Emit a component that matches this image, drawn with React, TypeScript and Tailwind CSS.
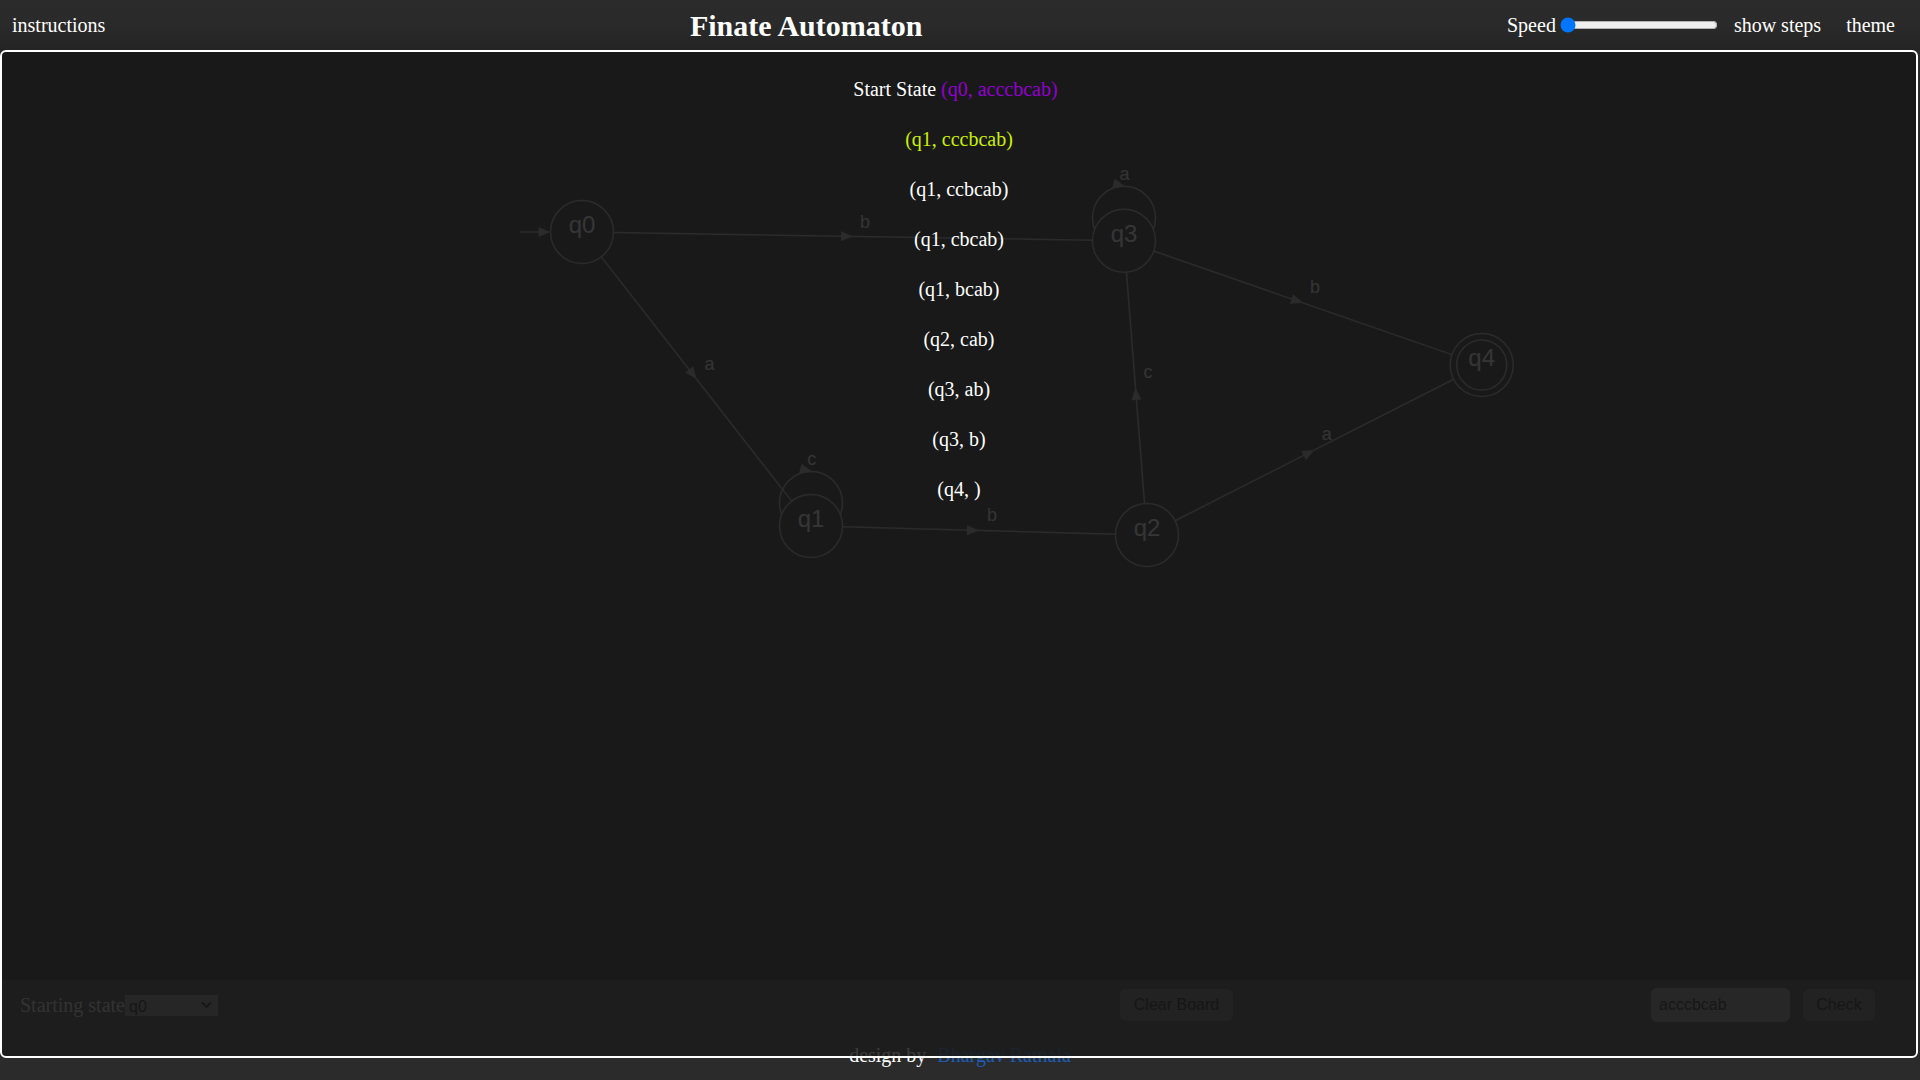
import React from "react";

type Node = { id: string; x: number; y: number; final?: boolean };
type Edge = { from: string; to: string; ch: string; lx: number; ly: number };
type Loop = { at: string; ch: string; lx: number; ly: number };

const R = 31.5;
const STROKE = "#8a8a8a";
const NODE_TEXT = "#d2d2d2";
const EDGE_TEXT = "#c8c8c8";

const nodes: Node[] = [
    { id: "q0", x: 582, y: 232 },
    { id: "q1", x: 811, y: 526 },
    { id: "q2", x: 1147, y: 535 },
    { id: "q3", x: 1124, y: 240.7 },
    { id: "q4", x: 1481.7, y: 365, final: true },
];

const edges: Edge[] = [
    { from: "q0", to: "q3", ch: "b", lx: 865, ly: 228 },
    { from: "q0", to: "q1", ch: "a", lx: 709.5, ly: 370 },
    { from: "q1", to: "q2", ch: "b", lx: 992, ly: 520.7 },
    { from: "q2", to: "q3", ch: "c", lx: 1148, ly: 378 },
    { from: "q3", to: "q4", ch: "b", lx: 1315, ly: 293 },
    { from: "q2", to: "q4", ch: "a", lx: 1326.7, ly: 440 },
];

const loops: Loop[] = [
    { at: "q1", ch: "c", lx: 811.7, ly: 465 },
    { at: "q3", ch: "a", lx: 1124.5, ly: 180 },
];

const steps = [
    "(q1, cccbcab)",
    "(q1, ccbcab)",
    "(q1, cbcab)",
    "(q1, bcab)",
    "(q2, cab)",
    "(q3, ab)",
    "(q3, b)",
    "(q4, )",
];

const byId = (id: string) => nodes.find((n) => n.id === id)!;

// triangle with its tip at (x, y) pointing along (ux, uy)
const arrowHead = (x: number, y: number, ux: number, uy: number) => {
    const bx = x - ux * 12;
    const by = y - uy * 12;
    const px = -uy * 5;
    const py = ux * 5;
    return `${x},${y} ${bx + px},${by + py} ${bx - px},${by - py}`;
};

const Graph = () => {
    return (
        <svg
            className="absolute inset-0"
            width={1918}
            height={930}
            viewBox="0 50 1918 930"
            fontFamily="'Liberation Sans', Arial, sans-serif"
        >
            {/* start arrow */}
            <line x1={520} y1={232} x2={542} y2={232} stroke={STROKE} strokeWidth={1.5} />
            <polygon points={arrowHead(550.5, 232, 1, 0)} fill={STROKE} />

            {edges.map((e, i) => {
                const a = byId(e.from);
                const b = byId(e.to);
                const dx = b.x - a.x;
                const dy = b.y - a.y;
                const len = Math.hypot(dx, dy);
                const ux = dx / len;
                const uy = dy / len;
                const mx = (a.x + b.x) / 2;
                const my = (a.y + b.y) / 2;
                return (
                    <g key={i}>
                        <line
                            x1={a.x + ux * R}
                            y1={a.y + uy * R}
                            x2={b.x - ux * R}
                            y2={b.y - uy * R}
                            stroke={STROKE}
                            strokeWidth={1.5}
                        />
                        <polygon points={arrowHead(mx, my, ux, uy)} fill={STROKE} />
                        <text x={e.lx} y={e.ly} fontSize={18} textAnchor="middle" fill={EDGE_TEXT}>
                            {e.ch}
                        </text>
                    </g>
                );
            })}

            {loops.map((l, i) => {
                const n = byId(l.at);
                const cy = n.y - 23;
                return (
                    <g key={i}>
                        <circle cx={n.x} cy={cy} r={R} fill="none" stroke={STROKE} strokeWidth={1.5} />
                        <polygon points={arrowHead(n.x + 1, cy - R, 0.97, 0.24)} fill={STROKE} />
                        <text x={l.lx} y={l.ly} fontSize={18} textAnchor="middle" fill={EDGE_TEXT}>
                            {l.ch}
                        </text>
                    </g>
                );
            })}

            {nodes.map((n) => (
                <g key={n.id}>
                    <circle cx={n.x} cy={n.y} r={R} fill="#1a1a1a" stroke={STROKE} strokeWidth={1.5} />
                    {n.final && (
                        <circle cx={n.x} cy={n.y} r={25} fill="none" stroke={STROKE} strokeWidth={1.5} />
                    )}
                    <text x={n.x} y={n.y + 1} fontSize={24} textAnchor="middle" fill={NODE_TEXT}>
                        {n.id}
                    </text>
                </g>
            ))}
        </svg>
    );
};

const Toolbar = () => {
    return (
        <div className="h-[78px] bg-[#2e2e2e] pt-[8px] pl-[20px]">
            <div className="flex h-[34px] items-center">
                <span className="text-[20px] text-[#bebebe]">Starting state</span>
                <div className="relative h-[21px] w-[93px] bg-[#6a6a6a]">
                    <select
                        defaultValue="q0"
                        className="h-full w-full appearance-none bg-transparent pl-[4px] font-['Liberation_Sans',Arial,sans-serif] text-[16px] leading-[21px] text-black outline-none"
                    >
                        <option value="q0">q0</option>
                        <option value="q1">q1</option>
                        <option value="q2">q2</option>
                        <option value="q3">q3</option>
                        <option value="q4">q4</option>
                    </select>
                    <svg
                        className="pointer-events-none absolute right-[6px] top-[6px]"
                        width="11"
                        height="8"
                        viewBox="0 0 11 8"
                    >
                        <path d="M1 1.5 L5.5 6 L10 1.5" fill="none" stroke="#000" strokeWidth="1.8" />
                    </svg>
                </div>
                <button className="ml-[902px] h-[32px] w-[113px] rounded-md bg-[#4f4f4f] font-['Liberation_Sans',Arial,sans-serif] text-[16px] text-black">
                    Clear Board
                </button>
                <input
                    defaultValue="acccbcab"
                    className="ml-[418px] h-[34px] w-[139px] rounded-md bg-[#727272] pl-[8px] font-['Liberation_Sans',Arial,sans-serif] text-[16px] text-black outline-none"
                />
                <button className="ml-[13px] h-[32px] w-[72px] rounded-md bg-[#4f4f4f] font-['Liberation_Sans',Arial,sans-serif] text-[16px] text-black">
                    Check
                </button>
            </div>
        </div>
    );
};

export default function App() {
    return (
        <div className="min-h-screen bg-[#2b2b2b] font-['Liberation_Serif','Times_New_Roman',serif] text-white">
            <header className="flex h-[50px] items-center justify-between bg-gradient-to-b from-[#2b2b2b] via-[#2a2a2a] to-[#242424] pl-3 pr-[25px]">
                <span className="text-[20px]">instructions</span>
                <h1 className="text-[30px] font-bold">Finate Automaton</h1>
                <div className="flex items-center text-[20px]">
                    <span>Speed</span>
                    <input type="range" min={0} max={100} defaultValue={0} className="ml-[4px] w-[158px]" />
                    <span className="ml-[16px]">show steps</span>
                    <span className="ml-[25px]">theme</span>
                </div>
            </header>

            <div className="relative">
                <div className="flex h-[1008px] w-[1918px] flex-col overflow-hidden rounded-md bg-[#1a1a1a]">
                    <div className="relative flex-1">
                        <Graph />
                    </div>
                    <Toolbar />
                </div>

                <footer className="-mt-[14px] text-center text-[20px] leading-[23px]">
                    design by{" "}
                    <a href="#" className="ml-[6px] text-[#1e5bb0]">
                        Bhargav Ratnala
                    </a>
                </footer>

                {/* steps overlay */}
                <div className="absolute left-0 top-0 flex h-[1008px] w-[1918px] flex-col items-center rounded-md border-2 border-white bg-[#1a1a1a]/85 pt-[12px] text-[20px]">
                    <div className="h-[50px] pr-[7px] leading-[50px]">
                        Start State <span className="text-[#9400d3]">(q0, acccbcab)</span>
                    </div>
                    {steps.map((s, i) => (
                        <div
                            key={i}
                            className={i === 0 ? "h-[50px] leading-[50px] text-[#ccf000]" : "h-[50px] leading-[50px]"}
                        >
                            {s}
                        </div>
                    ))}
                </div>
            </div>
        </div>
    );
}
